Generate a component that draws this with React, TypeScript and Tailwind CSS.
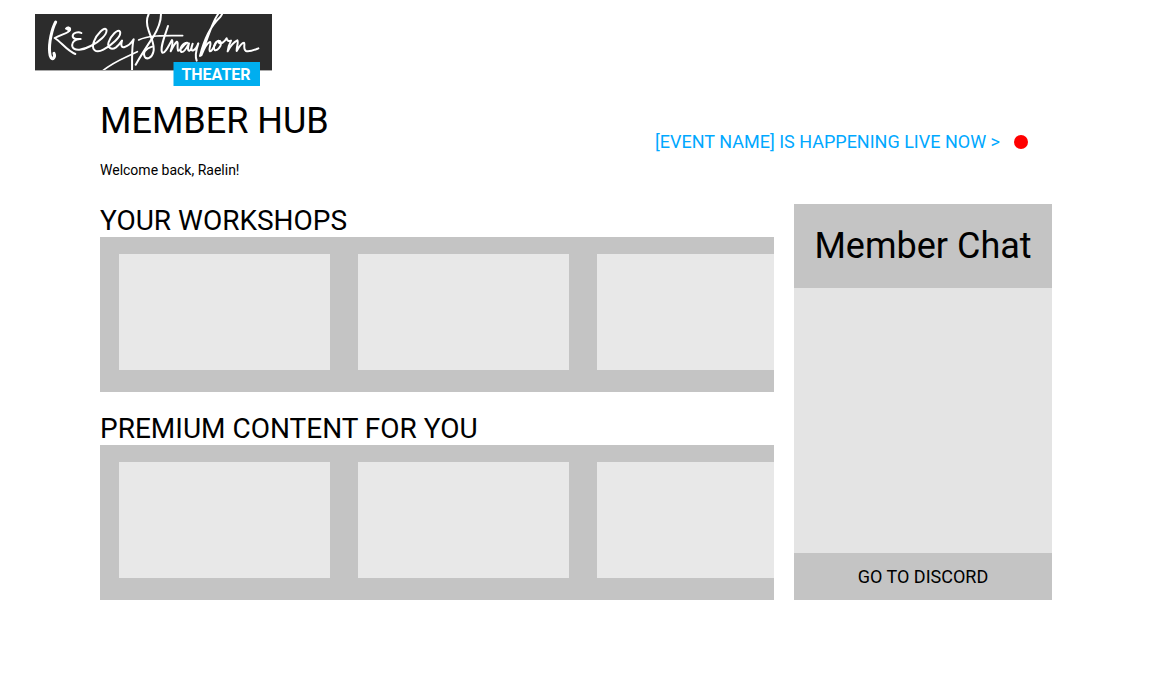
function Logo() {
  return (
    <svg
      viewBox="0 0 237 72"
      className="block h-[72px] w-[237px]"
      role="img"
      aria-label="Kelly Strayhorn Theater"
    >
      <defs>
        <clipPath id="logo-plate">
          <rect width="237" height="56" />
        </clipPath>
      </defs>
      <rect width="237" height="56.400" fill="#2c2c2c" />
      <g clipPath="url(#logo-plate)">
        <g
          transform="scale(0.33333) translate(-15 -18)"
          fill="none"
          stroke="#fff"
          strokeWidth="6"
          strokeLinecap="round"
          strokeLinejoin="round"
        >
          <path strokeWidth="9" d="M77 42C66 62 56 105 59 133C60 149 66 156 71 150C74 146 74 140 72 136" />
          <path strokeWidth="6" d="M108 62C114 56 122 58 120 66C116 76 95 78 74 90C92 100 110 128 136 138" />
          <path strokeWidth="9" d="M112 62C116 59 120 62 117 67" />
          <path d="M154 75C145 70 128 74 128 84C128 93 140 94 152 93C136 92 124 103 127 115C132 131 160 126 182 114C205 103 234 79 229 65C224 54 200 79 192 100C182 126 198 137 220 125C242 114 276 85 270 71C264 60 242 84 236 102C230 122 246 126 258 118C266 112 272 104 276 98C272 112 274 120 284 117C296 114 306 102 311 94C304 120 307 155 306 192" />
          <path strokeWidth="5" d="M216 190C240 170 266 157 290 146L322 131" />
          <path d="M317 170C333 142 350 116 370 86C388 56 396 34 392 10" />
          <path d="M362 8C350 24 348 46 356 68C364 92 376 112 370 132C366 150 350 156 344 146C338 134 346 122 366 116" />
          <path strokeWidth="5" d="M326 96C352 82 400 82 458 83" />
          <path d="M414 54C406 80 388 122 397 134C404 138 416 114 426 96C430 100 426 116 422 130C428 118 434 106 441 101C446 102 440 116 444 128C450 130 458 112 472 104C458 104 446 124 454 132C462 134 472 116 477 106C474 118 472 130 479 128C484 126 486 114 488 107C482 122 484 130 490 127C496 124 502 114 505 106C499 124 495 146 500 158" />
          <path d="M510 144C520 104 540 56 570 28C578 18 580 10 574 8C556 18 534 84 514 142C522 122 532 104 540 102C546 104 534 126 540 130C546 130 552 116 558 104" />
          <path d="M566 98C556 100 548 118 554 126C562 130 576 114 572 102C570 98 566 98 566 104C572 110 584 102 590 91C590 98 597 101 603 98C599 106 594 120 593 130C600 116 612 102 622 97C627 98 619 118 620 129C626 118 634 104 642 104C646 108 638 124 648 129C658 133 673 126 685 121" />
        </g>
      </g>
      <rect x="138.500" y="48" width="86.500" height="24" fill="#00aeef" />
      <text
        x="181"
        y="66"
        textAnchor="middle"
        fill="#fff"
        className="font-[Roboto,sans-serif] text-[16px] font-bold"
      >
        THEATER
      </text>
    </svg>
  );
}

function ContentShelf({ title, items }: { title: string; items: string[] }) {
  return (
    <section>
      <h2 className="text-[28px] leading-[33px]">{title}</h2>
      <ul className="flex gap-7 overflow-hidden bg-[#c4c4c4] pt-[17px] pb-[22px] pl-[19px]">
        {items.map((item) => (
          <li key={item} className="h-[116px] w-[211px] shrink-0 bg-[#e8e8e8]" />
        ))}
      </ul>
    </section>
  );
}

export default function App() {
  return (
    <div className="min-h-screen bg-white font-[Roboto,sans-serif] text-black">
      <header className="pt-[14px] pl-[35px]">
        <Logo />
      </header>
      <main className="px-[100px] pt-[14px] pb-[100px]">
        <div className="flex items-end justify-between pb-[26px]">
          <div>
            <h1 className="text-4xl leading-[42px]">MEMBER HUB</h1>
            <p className="pt-5 text-sm leading-4">Welcome back, Raelin!</p>
          </div>
          <a href="#live" className="flex items-center gap-[14px] pr-6 pb-[26px] text-lg leading-5 text-[#00a8ff]">
            [EVENT NAME] IS HAPPENING LIVE NOW &gt;
            <span className="size-[14px] rounded-full bg-[#ff0000]" />
          </a>
        </div>
        <div className="flex gap-5">
          <div className="flex min-w-0 flex-1 flex-col gap-5">
            <ContentShelf title="YOUR WORKSHOPS" items={["w1", "w2", "w3"]} />
            <ContentShelf title="PREMIUM CONTENT FOR YOU" items={["p1", "p2", "p3"]} />
          </div>
          <aside className="flex w-[258px] shrink-0 flex-col bg-[#e4e4e4]">
            <h2 className="bg-[#c4c4c4] text-center text-4xl leading-[84px]">Member Chat</h2>
            <div className="flex-1" />
            <button type="button" className="bg-[#c4c4c4] text-lg leading-[47px]">
              GO TO DISCORD
            </button>
          </aside>
        </div>
      </main>
    </div>
  );
}
